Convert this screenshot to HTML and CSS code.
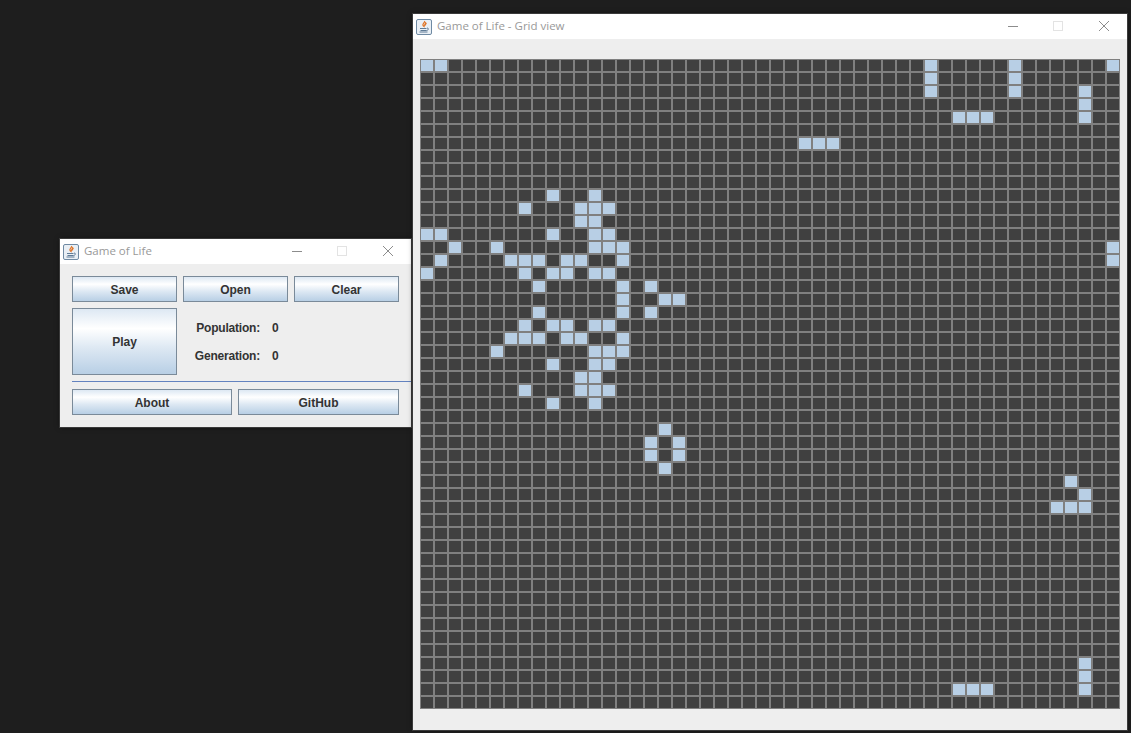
FILE: index.html
```html
<!DOCTYPE html>
<html>
<head>
  <title>Game of Life</title>
  <link rel="stylesheet" href="styles.css">
</head>
<body>
<div class="window controlWindow">
  <div class="titleBar">
    <svg class="javaIcon" viewBox="0 0 16 16">
      <rect x="0.5" y="0.5" width="15" height="15" rx="1.5" fill="#e9eff5" stroke="#6f8aa3"/>
      <path d="M8.5 2c1 1.5-2.5 2.5-1.5 4.5.4.8 1 1 1 1-.5-1.5 3-2.5 1.5-4.5M10.5 4c-1 .8-1.5 1.3-1 2.5" fill="none" stroke="#e0762a" stroke-width="1.2"/>
      <path d="M4 9.5h6.5M4.5 11.5h6M3.5 13h8M11 9c2 0 2 2-.5 2.5" fill="none" stroke="#5f7b96"/>
    </svg>
    <span class="titleText">Game of Life</span>
    <div class="captionButtons">
      <svg class="caption" viewBox="0 0 45 25"><path d="M17 12.5h10" stroke="#8c8c8c"/></svg>
      <svg class="caption" viewBox="0 0 45 25"><rect x="17.5" y="7.5" width="9" height="9" fill="none" stroke="#e3e3e3"/></svg>
      <svg class="caption" viewBox="0 0 45 25"><path d="M18 7l10 10M28 7l-10 10" stroke="#8c8c8c"/></svg>
    </div>
  </div>
  <div class="controlBody">
    <div class="buttonRow threeCols">
      <button class="metalBtn">Save</button>
      <button class="metalBtn">Open</button>
      <button class="metalBtn">Clear</button>
    </div>
    <div class="playRow">
      <button class="metalBtn playBtn">Play</button>
      <div class="stats">
        <span class="statLabel">Population:</span><span>0</span>
        <span class="statLabel">Generation:</span><span>0</span>
      </div>
    </div>
    <div class="separator"></div>
    <div class="buttonRow twoCols">
      <button class="metalBtn">About</button>
      <button class="metalBtn">GitHub</button>
    </div>
  </div>
</div>

<div class="window gridWindow">
  <div class="titleBar">
    <svg class="javaIcon" viewBox="0 0 16 16">
      <rect x="0.5" y="0.5" width="15" height="15" rx="1.5" fill="#e9eff5" stroke="#6f8aa3"/>
      <path d="M8.5 2c1 1.5-2.5 2.5-1.5 4.5.4.8 1 1 1 1-.5-1.5 3-2.5 1.5-4.5M10.5 4c-1 .8-1.5 1.3-1 2.5" fill="none" stroke="#e0762a" stroke-width="1.2"/>
      <path d="M4 9.5h6.5M4.5 11.5h6M3.5 13h8M11 9c2 0 2 2-.5 2.5" fill="none" stroke="#5f7b96"/>
    </svg>
    <span class="titleText">Game of Life - Grid view</span>
    <div class="captionButtons">
      <svg class="caption" viewBox="0 0 45 25"><path d="M17 12.5h10" stroke="#8c8c8c"/></svg>
      <svg class="caption" viewBox="0 0 45 25"><rect x="17.5" y="7.5" width="9" height="9" fill="none" stroke="#e3e3e3"/></svg>
      <svg class="caption" viewBox="0 0 45 25"><path d="M18 7l10 10M28 7l-10 10" stroke="#8c8c8c"/></svg>
    </div>
  </div>
  <div class="gridBody">
    <div id="grid" class="grid"></div>
  </div>
</div>

<script src="script.js"></script>
</body>
</html>
```

FILE: styles.css
```css
html, body {
  margin: 0;
  height: 100%;
  overflow: hidden;
}

body {
  background-color: #1e1e1e;
  font-family: "Liberation Sans", Arial, sans-serif;
}

.window {
  position: absolute;
  display: flex;
  flex-direction: column;
  background-color: #eeeeee;
  box-shadow: 0 0 0 1px #3a3a3a, 0 0 5px rgba(0, 0, 0, 0.5);
}

.controlWindow {
  left: 60px;
  top: 239px;
  width: 351px;
  height: 188px;
}

.gridWindow {
  left: 413px;
  top: 14px;
  width: 714px;
  height: 716px;
}

.titleBar {
  display: flex;
  align-items: center;
  flex: none;
  height: 25px;
  padding-left: 3px;
  background-color: #ffffff;
}

.javaIcon {
  width: 16px;
  height: 16px;
  margin-right: 5px;
}

.titleText {
  margin-top: -3px;
  font-family: "Open Sans", "Noto Sans", sans-serif;
  font-size: 11.5px;
  color: #999999;
}

.captionButtons {
  display: flex;
  margin-left: auto;
  margin-right: 1px;
}

.caption {
  display: block;
  width: 45px;
  height: 25px;
}

.controlBody {
  padding: 12px 12px 12px;
}

.buttonRow {
  display: grid;
  gap: 6px;
  width: 327px;
}

.threeCols {
  grid-template-columns: 105px 105px 105px;
}

.twoCols {
  grid-template-columns: 160px 161px;
}

.metalBtn {
  height: 26px;
  padding: 2px 0 0;
  border: 1px solid #7a8a99;
  background: linear-gradient(#dde8f3 0%, #ffffff 30%, #dde8f3 60%, #b8cfe5 100%);
  font-family: "Liberation Sans", Arial, sans-serif;
  font-size: 12px;
  font-weight: bold;
  color: #333333;
}

.playRow {
  display: flex;
  margin-top: 6px;
}

.playBtn {
  width: 105px;
  height: 67px;
  padding: 0;
}

.stats {
  display: grid;
  grid-template-columns: 78px auto;
  grid-auto-rows: 28px;
  column-gap: 12px;
  align-items: center;
  align-content: center;
  margin-left: 5px;
  font-size: 12px;
  font-weight: bold;
  color: #333333;
}

.statLabel {
  text-align: right;
  letter-spacing: -0.2px;
}

.separator {
  height: 1px;
  margin: 6px -12px 7px 0;
  background-color: #6382bf;
}

.gridBody {
  padding: 20px 7px 0;
}

.grid {
  display: grid;
  grid-template-columns: repeat(50, 14px);
  grid-template-rows: repeat(50, 13px);
  width: 700px;
  height: 650px;
}

.cell {
  box-sizing: border-box;
  border: 1px solid #808080;
  background-color: #404040;
}

.cell.alive {
  background-color: #b8cfe5;
}
```

FILE: script.js
```js
// row -> live columns
const liveCells = {
  0: [0, 1, 36, 42, 49],
  1: [36, 42],
  2: [36, 42, 47],
  3: [47],
  4: [38, 39, 40, 47],
  6: [27, 28, 29],
  10: [9, 12],
  11: [7, 11, 12, 13],
  12: [11, 12],
  13: [0, 1, 9, 12, 13],
  14: [2, 5, 12, 13, 14, 49],
  15: [1, 6, 7, 8, 10, 11, 14, 49],
  16: [0, 7, 9, 10, 12, 13],
  17: [8, 14, 16],
  18: [14, 17, 18],
  19: [8, 14, 16],
  20: [7, 9, 10, 12, 13],
  21: [6, 7, 8, 10, 11, 14],
  22: [5, 12, 13, 14],
  23: [9, 12, 13],
  24: [11, 12],
  25: [7, 11, 12, 13],
  26: [9, 12],
  28: [17],
  29: [16, 18],
  30: [16, 18],
  31: [17],
  32: [46],
  33: [47],
  34: [45, 46, 47],
  46: [47],
  47: [47],
  48: [38, 39, 40, 47]
};

const grid = document.getElementById('grid');

for (let row = 0; row < 50; row++) {
  const live = liveCells[row] || [];
  for (let col = 0; col < 50; col++) {
    const cell = document.createElement('div');
    cell.className = live.includes(col) ? 'cell alive' : 'cell';
    grid.appendChild(cell);
  }
}
```
